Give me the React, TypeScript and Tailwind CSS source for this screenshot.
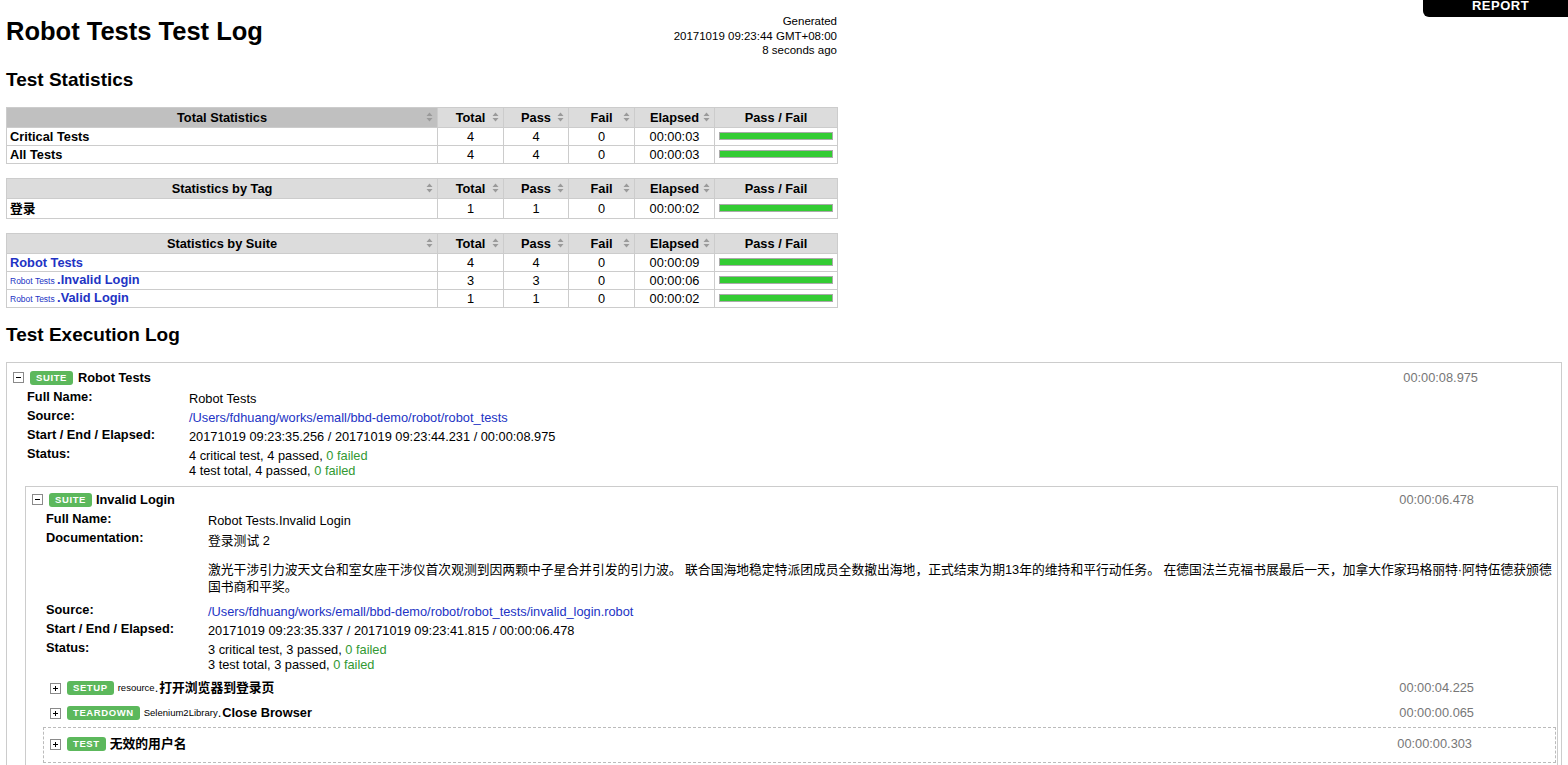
import React from "react";

type StatRow = {
  name: React.ReactNode;
  total: number;
  pass: number;
  fail: number;
  elapsed: string;
  tall?: boolean;
};

function SortArrow() {
  return (
    <svg
      width="7"
      height="10"
      viewBox="0 0 7 10"
      className="absolute right-[4px] top-1/2 -translate-y-1/2"
    >
      <path d="M3.5 0.5 L6.5 4 H0.5 Z M3.5 9.5 L6.5 6 H0.5 Z" fill="#9a9a9a" />
    </svg>
  );
}

function PassBar() {
  return (
    <div className="mx-[4px] h-[8px] border border-[#aaa] bg-[#33cc33]" />
  );
}

function StatTable({
  title,
  rows,
  sorted,
}: {
  title: string;
  rows: StatRow[];
  sorted?: boolean;
}) {
  const th =
    "relative h-[20px] border border-[#ccc] bg-[#dcdcdc] p-0 text-center font-bold leading-[15px]";
  return (
    <table className="w-[831px] table-fixed border-collapse border border-[#bbb] text-[12.8px]">
      <colgroup>
        <col className="w-[431px]" />
        <col className="w-[66px]" />
        <col className="w-[65px]" />
        <col className="w-[66px]" />
        <col className="w-[80px]" />
        <col className="w-[123px]" />
      </colgroup>
      <thead>
        <tr>
          <th
            className={
              sorted
                ? "relative h-[20px] border border-[#ccc] bg-[#c0c0c0] p-0 text-center font-bold leading-[15px]"
                : th
            }
          >
            {title}
            <SortArrow />
          </th>
          <th className={th}>
            Total
            <SortArrow />
          </th>
          <th className={th}>
            Pass
            <SortArrow />
          </th>
          <th className={th}>
            Fail
            <SortArrow />
          </th>
          <th className={th}>
            Elapsed
            <SortArrow />
          </th>
          <th className={th}>Pass / Fail</th>
        </tr>
      </thead>
      <tbody>
        {rows.map((r, i) => (
          <tr key={i} className={r.tall ? "h-[20px]" : "h-[18px]"}>
            <td className="border border-[#ccc] px-[3px] py-0 font-bold leading-[15px]">
              {r.name}
            </td>
            <td className="border border-[#ccc] p-0 text-center leading-[15px]">
              {r.total}
            </td>
            <td className="border border-[#ccc] p-0 text-center leading-[15px]">
              {r.pass}
            </td>
            <td className="border border-[#ccc] p-0 text-center leading-[15px]">
              {r.fail}
            </td>
            <td className="border border-[#ccc] p-0 text-center leading-[15px]">
              {r.elapsed}
            </td>
            <td className="border border-[#ccc] p-0">
              <PassBar />
            </td>
          </tr>
        ))}
      </tbody>
    </table>
  );
}

function SuiteLink({ parent, name }: { parent?: string; name: string }) {
  return (
    <span className="text-[#2233c4]">
      {parent && (
        <>
          <span className="text-[8.5px] font-normal">{parent} </span>
          <span>.</span>
        </>
      )}
      {name}
    </span>
  );
}

function Toggle({ open }: { open: boolean }) {
  return (
    <svg width="11" height="11" viewBox="0 0 11 11" className="shrink-0">
      <rect x="0.5" y="0.5" width="10" height="10" fill="#fff" stroke="#8a8a8a" />
      <path d="M3 5.5 H8" stroke="#000" />
      {!open && <path d="M5.5 3 V8" stroke="#000" />}
    </svg>
  );
}

function Badge({ children }: { children: React.ReactNode }) {
  return (
    <span className="ml-[6px] shrink-0 rounded-[3px] bg-[#5cb85c] px-[6px] text-[9.5px] font-bold leading-[14px] tracking-[0.6px] text-white uppercase">
      {children}
    </span>
  );
}

function Meta({ label, children }: { label: string; children: React.ReactNode }) {
  return (
    <div className="grid grid-cols-[162px_1fr] py-[1px]">
      <div className="font-bold leading-[15px]">{label}</div>
      <div className="pt-[2px] leading-[15px]">{children}</div>
    </div>
  );
}

function Failed() {
  return <span className="text-[#339933]">0 failed</span>;
}

function Keyword({
  type,
  lib,
  name,
  elapsed,
}: {
  type: string;
  lib: string;
  name: string;
  elapsed: string;
}) {
  return (
    <div className="ml-[18px] mr-[3px] flex h-[25px] items-center pl-[6px]">
      <Toggle open={false} />
      <Badge>{type}</Badge>
      <span className="ml-[4px] text-[9.5px]">{lib} </span>
      <span className="mr-[1px]">.</span>
      <span className="font-bold">{name}</span>
      <span className="ml-auto mr-[80px] text-[#777]">{elapsed}</span>
    </div>
  );
}

function TestBox({ name, elapsed }: { name: string; elapsed: string }) {
  return (
    <div className="ml-[17px] mr-[1px] mt-[1px] border border-dashed border-[#bbb] pb-[5px] pt-[4px]">
      <div className="flex h-[25px] items-center pl-[6px]">
        <Toggle open={false} />
        <Badge>test</Badge>
        <span className="ml-[4px] font-bold">{name}</span>
        <span className="ml-auto mr-[83px] text-[#777]">{elapsed}</span>
      </div>
    </div>
  );
}

export default function App() {
  return (
    <div className="relative min-h-screen bg-white px-[6px] text-[12.8px] text-black [font-family:'Liberation_Sans','Noto_Sans_CJK_SC',sans-serif]">
      <a className="absolute right-0 top-0 flex h-[17px] w-[145px] justify-center rounded-bl-[6px] bg-black pl-[10px] text-[13px] font-bold leading-[12px] tracking-[0.5px] text-white">
        REPORT
      </a>

      <div className="flex w-[831px] items-start justify-between">
        <h1 className="mt-[16px] text-[25.5px] font-bold leading-[30px]">
          Robot Tests Test Log
        </h1>
        <div className="mt-[14px] text-right text-[11.5px] leading-[14.5px]">
          <div>Generated</div>
          <div>20171019 09:23:44 GMT+08:00</div>
          <div>8 seconds ago</div>
        </div>
      </div>

      <h2 className="mt-[10px] text-[19px] font-bold leading-[24px]">Test Statistics</h2>

      <div className="mt-[15px] flex flex-col gap-[14px]">
        <StatTable
          title="Total Statistics"
          sorted
          rows={[
            { name: "Critical Tests", total: 4, pass: 4, fail: 0, elapsed: "00:00:03" },
            { name: "All Tests", total: 4, pass: 4, fail: 0, elapsed: "00:00:03" },
          ]}
        />
        <StatTable
          title="Statistics by Tag"
          rows={[{ name: "登录", total: 1, pass: 1, fail: 0, elapsed: "00:00:02", tall: true }]}
        />
        <StatTable
          title="Statistics by Suite"
          rows={[
            { name: <SuiteLink name="Robot Tests" />, total: 4, pass: 4, fail: 0, elapsed: "00:00:09" },
            {
              name: <SuiteLink parent="Robot Tests" name="Invalid Login" />,
              total: 3,
              pass: 3,
              fail: 0,
              elapsed: "00:00:06",
            },
            {
              name: <SuiteLink parent="Robot Tests" name="Valid Login" />,
              total: 1,
              pass: 1,
              fail: 0,
              elapsed: "00:00:02",
            },
          ]}
        />
      </div>

      <h2 className="mt-[15px] text-[19px] font-bold leading-[24px]">Test Execution Log</h2>

      <div className="mt-[15px] border border-[#ccc] pb-[6px] pt-[5px]">
        <div className="flex h-[20px] items-center pl-[6px]">
          <Toggle open />
          <Badge>suite</Badge>
          <span className="ml-[5px] font-bold">Robot Tests</span>
          <span className="ml-auto mr-[83px] text-[#777]">00:00:08.975</span>
        </div>
        <div className="pl-[20px]">
          <Meta label="Full Name:">Robot Tests</Meta>
          <Meta label="Source:">
            <span className="text-[#2233c4]">/Users/fdhuang/works/emall/bbd-demo/robot/robot_tests</span>
          </Meta>
          <Meta label="Start / End / Elapsed:">
            20171019 09:23:35.256 / 20171019 09:23:44.231 / 00:00:08.975
          </Meta>
          <Meta label="Status:">
            <div>
              4 critical test, 4 passed, <Failed />
            </div>
            <div>
              4 test total, 4 passed, <Failed />
            </div>
          </Meta>
        </div>

        <div className="ml-[18px] mr-[3px] mt-[7px] border border-[#ccc] pb-[6px] pt-[3px]">
          <div className="flex h-[20px] items-center pl-[6px]">
            <Toggle open />
            <Badge>suite</Badge>
            <span className="ml-[4px] font-bold">Invalid Login</span>
            <span className="ml-auto mr-[83px] text-[#777]">00:00:06.478</span>
          </div>
          <div className="pl-[20px] pr-[5px]">
            <Meta label="Full Name:">Robot Tests.Invalid Login</Meta>
            <div className="grid grid-cols-[162px_1fr] py-[1px]">
              <div className="font-bold leading-[15px]">Documentation:</div>
              <div className="pb-[5px] pt-[2px] leading-[17px]">
                <p>登录测试 2</p>
                <p className="mt-[12px]">
                  激光干涉引力波天文台和室女座干涉仪首次观测到因两颗中子星合并引发的引力波。 联合国海地稳定特派团成员全数撤出海地，正式结束为期13年的维持和平行动任务。 在德国法兰克福书展最后一天，加拿大作家玛格丽特·阿特伍德获颁德国书商和平奖。
                </p>
              </div>
            </div>
            <Meta label="Source:">
              <span className="text-[#2233c4]">
                /Users/fdhuang/works/emall/bbd-demo/robot/robot_tests/invalid_login.robot
              </span>
            </Meta>
            <Meta label="Start / End / Elapsed:">
              20171019 09:23:35.337 / 20171019 09:23:41.815 / 00:00:06.478
            </Meta>
            <Meta label="Status:">
              <div>
                3 critical test, 3 passed, <Failed />
              </div>
              <div>
                3 test total, 3 passed, <Failed />
              </div>
            </Meta>
          </div>
          <div className="mt-[3px]">
            <Keyword type="setup" lib="resource" name="打开浏览器到登录页" elapsed="00:00:04.225" />
            <Keyword type="teardown" lib="Selenium2Library" name="Close Browser" elapsed="00:00:00.065" />
          </div>
          <TestBox name="无效的用户名" elapsed="00:00:00.303" />
        </div>
      </div>
    </div>
  );
}
